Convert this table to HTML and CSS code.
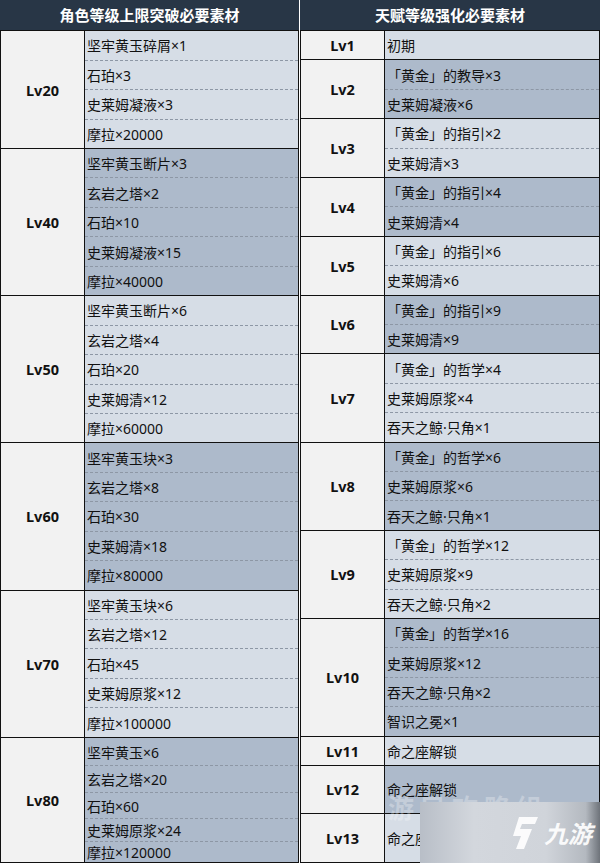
FILE: index.html
```html
<!DOCTYPE html>
<html lang="zh">
<head>
<meta charset="utf-8">
<title>材料表</title>
<link rel="stylesheet" href="styles.css">
</head>
<body>
<div class="page">
  <div class="tbl tl">
    <div class="hd">角色等级上限突破必要素材</div>
    <div class="grp light h4">
      <div class="lv">Lv20</div>
      <div class="items"><div class="it">坚牢黄玉碎屑×1</div><div class="it">石珀×3</div><div class="it">史莱姆凝液×3</div><div class="it">摩拉×20000</div></div>
    </div>
    <div class="grp dark h5">
      <div class="lv">Lv40</div>
      <div class="items"><div class="it">坚牢黄玉断片×3</div><div class="it">玄岩之塔×2</div><div class="it">石珀×10</div><div class="it">史莱姆凝液×15</div><div class="it">摩拉×40000</div></div>
    </div>
    <div class="grp light h5">
      <div class="lv">Lv50</div>
      <div class="items"><div class="it">坚牢黄玉断片×6</div><div class="it">玄岩之塔×4</div><div class="it">石珀×20</div><div class="it">史莱姆清×12</div><div class="it">摩拉×60000</div></div>
    </div>
    <div class="grp dark h5">
      <div class="lv">Lv60</div>
      <div class="items"><div class="it">坚牢黄玉块×3</div><div class="it">玄岩之塔×8</div><div class="it">石珀×30</div><div class="it">史莱姆清×18</div><div class="it">摩拉×80000</div></div>
    </div>
    <div class="grp light h5">
      <div class="lv">Lv70</div>
      <div class="items"><div class="it">坚牢黄玉块×6</div><div class="it">玄岩之塔×12</div><div class="it">石珀×45</div><div class="it">史莱姆原浆×12</div><div class="it">摩拉×100000</div></div>
    </div>
    <div class="grp dark last lv80">
      <div class="lv">Lv80</div>
      <div class="items"><div class="it">坚牢黄玉×6</div><div class="it">玄岩之塔×20</div><div class="it">石珀×60</div><div class="it">史莱姆原浆×24</div><div class="it">摩拉×120000</div></div>
    </div>
  </div>
  <div class="tbl tr">
    <div class="hd">天赋等级强化必要素材</div>
    <div class="grp light h1">
      <div class="lv">Lv1</div>
      <div class="items"><div class="it">初期</div></div>
    </div>
    <div class="grp dark h2">
      <div class="lv">Lv2</div>
      <div class="items"><div class="it">「黄金」的教导×3</div><div class="it">史莱姆凝液×6</div></div>
    </div>
    <div class="grp light h2">
      <div class="lv">Lv3</div>
      <div class="items"><div class="it">「黄金」的指引×2</div><div class="it">史莱姆清×3</div></div>
    </div>
    <div class="grp dark h2">
      <div class="lv">Lv4</div>
      <div class="items"><div class="it">「黄金」的指引×4</div><div class="it">史莱姆清×4</div></div>
    </div>
    <div class="grp light h2">
      <div class="lv">Lv5</div>
      <div class="items"><div class="it">「黄金」的指引×6</div><div class="it">史莱姆清×6</div></div>
    </div>
    <div class="grp dark h2">
      <div class="lv">Lv6</div>
      <div class="items"><div class="it">「黄金」的指引×9</div><div class="it">史莱姆清×9</div></div>
    </div>
    <div class="grp light h3">
      <div class="lv">Lv7</div>
      <div class="items"><div class="it">「黄金」的哲学×4</div><div class="it">史莱姆原浆×4</div><div class="it">吞天之鲸·只角×1</div></div>
    </div>
    <div class="grp dark h3">
      <div class="lv">Lv8</div>
      <div class="items"><div class="it">「黄金」的哲学×6</div><div class="it">史莱姆原浆×6</div><div class="it">吞天之鲸·只角×1</div></div>
    </div>
    <div class="grp light h3">
      <div class="lv">Lv9</div>
      <div class="items"><div class="it">「黄金」的哲学×12</div><div class="it">史莱姆原浆×9</div><div class="it">吞天之鲸·只角×2</div></div>
    </div>
    <div class="grp dark h4r">
      <div class="lv">Lv10</div>
      <div class="items"><div class="it">「黄金」的哲学×16</div><div class="it">史莱姆原浆×12</div><div class="it">吞天之鲸·只角×2</div><div class="it">智识之冕×1</div></div>
    </div>
    <div class="grp light h1">
      <div class="lv">Lv11</div>
      <div class="items"><div class="it">命之座解锁</div></div>
    </div>
    <div class="grp dark h12">
      <div class="lv">Lv12</div>
      <div class="items"><div class="it">命之座解锁</div></div>
    </div>
    <div class="grp light last">
      <div class="lv">Lv13</div>
      <div class="items"><div class="it">命之座解锁</div></div>
    </div>
  </div>
  <div class="wm-text">游民攻略组</div>
  <div class="wm">
    <svg class="wm-logo" viewBox="0 0 30 36" width="30" height="36">
      <path d="M9 2 H28 L25 9 H12 L10 14 H22 L14 34 H6 L11 21 H3 L9 2 Z" fill="#ffffff" opacity="0.9"/>
    </svg>
    <span class="wm-name">九游</span>
  </div>
</div>
</body>
</html>
```
FILE: styles.css
```css
html, body {
  margin: 0;
  padding: 0;
  background: #ffffff;
}
.page {
  position: relative;
  width: 600px;
  height: 863px;
  overflow: hidden;
  display: flex;
  gap: 1px;
  font-family: "Noto Sans", "Noto Sans CJK SC", sans-serif;
  color: #111;
}
.tbl {
  display: flex;
  flex-direction: column;
  border-left: 1px solid #111;
  border-right: 1px solid #111;
  border-bottom: 1px solid #111;
  box-sizing: border-box;
  height: 863px;
}
.tl { width: 299px; }
.tr { width: 300px; }
.hd {
  height: 30px;
  flex: none;
  background: #283646;
  color: #ffffff;
  font-weight: bold;
  font-size: 15px;
  line-height: 30px;
  text-align: center;
  margin: 0 -1px;
}
.grp {
  flex: none;
  display: grid;
  grid-template-columns: 84px 1fr;
  border-top: 1px solid #111;
  box-sizing: border-box;
}
.grp.last { flex: 1; }
.h1 { height: 29.4px; }
.h2 { height: 58.8px; }
.h3 { height: 88.2px; }
.h4 { height: 118px; }
.h4r { height: 117.6px; }
.h5 { height: 147.2px; }
.h12 { height: 48px; }
.lv {
  background: #f2f2f2;
  border-right: 1px solid #111;
  display: flex;
  align-items: center;
  justify-content: center;
  font-weight: bold;
  font-size: 14.5px;
}
.items {
  display: flex;
  flex-direction: column;
}
.it {
  flex: 1;
  display: flex;
  align-items: center;
  padding-left: 2px;
  font-size: 14px;
  white-space: nowrap;
  overflow: hidden;
}
.it + .it {
  border-top: 1px dashed #8d97a5;
}
.lv80 .it:nth-child(1) { flex: 29; }
.lv80 .it:nth-child(2) { flex: 27; }
.lv80 .it:nth-child(3) { flex: 26; }
.lv80 .it:nth-child(4) { flex: 23; }
.lv80 .it:nth-child(5) { flex: 21; }
.light .items { background: #d6dde6; }
.dark .items { background: #adbacb; }
.wm-text {
  position: absolute;
  left: 388px;
  top: 788px;
  font-size: 26px;
  font-weight: bold;
  letter-spacing: 6px;
  color: rgba(255, 255, 255, 0.28);
  font-family: "Noto Sans CJK SC", sans-serif;
}
.wm {
  position: absolute;
  left: 420px;
  top: 802px;
  width: 180px;
  height: 61px;
  background: linear-gradient(90deg, #b8bec7 0%, #d3d7dd 30%, #d0d4da 70%, #b4b9c0 92%, #6e737a 100%);
  display: flex;
  align-items: center;
  justify-content: flex-end;
  gap: 4px;
  padding-right: 8px;
  box-sizing: border-box;
}
.wm-logo { flex: none; }
.wm-name {
  color: #ffffff;
  font-size: 24px;
  font-weight: bold;
  font-style: italic;
  font-family: "Noto Sans CJK SC", sans-serif;
  opacity: 0.92;
}
```
